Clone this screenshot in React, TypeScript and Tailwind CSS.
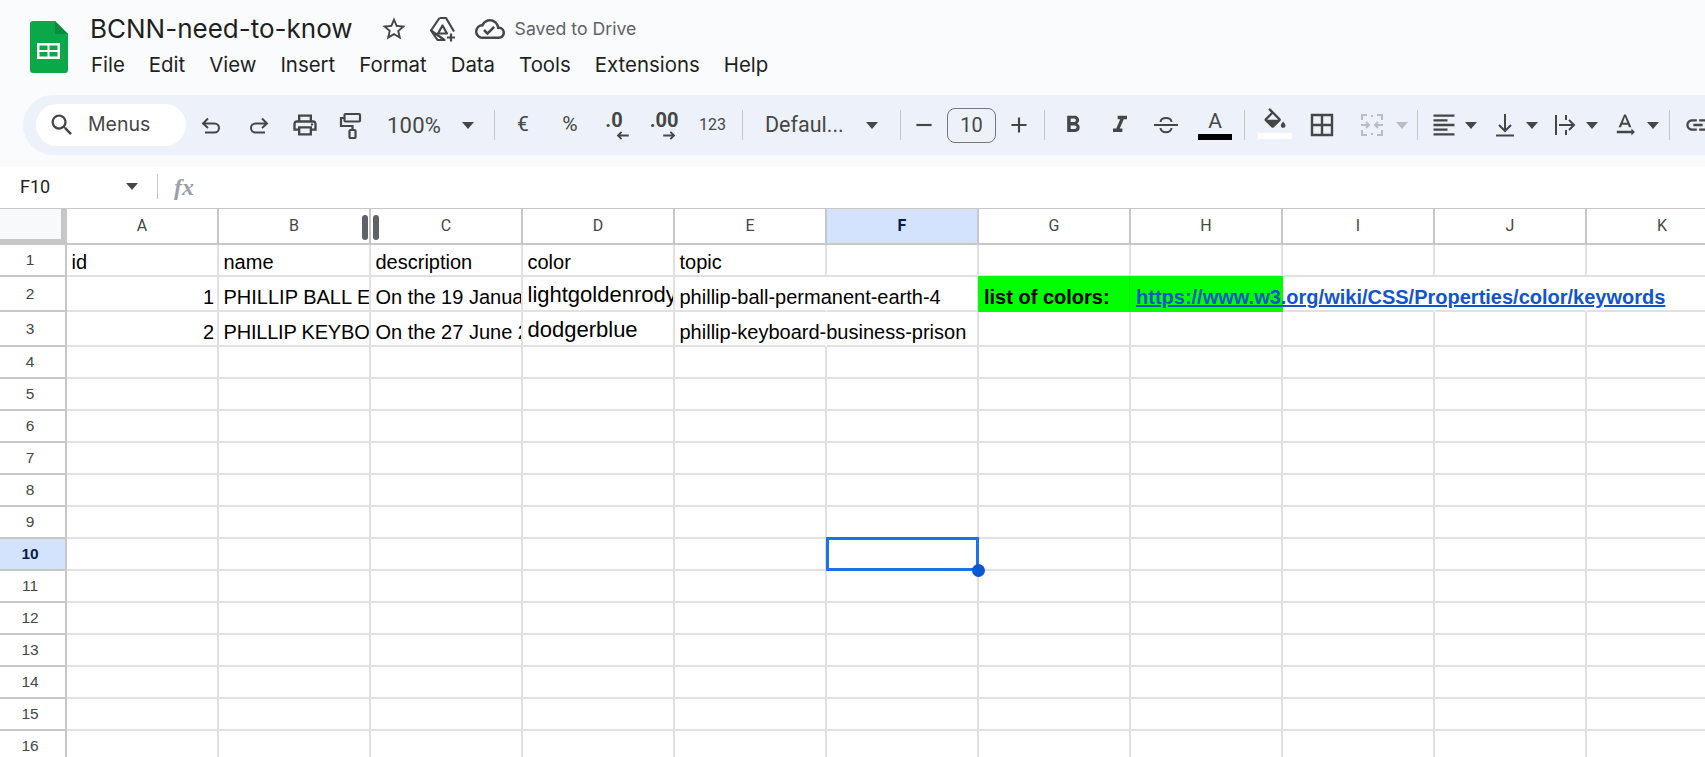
import React from 'react';
import clsx from 'clsx';
import {
  MdAdd,
  MdFormatAlignLeft,
  MdFormatBold,
  MdFormatItalic,
  MdInsertLink,
  MdOutlineCloudDone,
  MdOutlinePrint,
  MdRemove,
  MdSearch,
  MdStarBorder,
  MdTextRotationNone,
} from 'react-icons/md';

const Caret = ({ className }: { className?: string }) => (
  <svg viewBox="0 0 12 7" className={clsx('w-[12px] h-[7px] flex-none', className)}>
    <path d="M0 0h12L6 7z" fill="currentColor" />
  </svg>
);

const Sep = ({ className }: { className?: string }) => (
  <div className={clsx('w-px h-[30px] flex-none bg-[#c7c7c7]', className)} />
);

const Stroke = ({ d, className }: { d: string; className?: string }) => (
  <svg viewBox="0 0 24 24" fill="none" stroke="currentColor" strokeWidth="2" className={clsx('w-6 h-6 flex-none', className)}>
    <path d={d} />
  </svg>
);

const SheetsLogo = () => (
  <svg viewBox="0 0 38 52" className="w-[38px] h-[52px] flex-none">
    <path d="M3 0h22l13 13v36a3 3 0 0 1-3 3H3a3 3 0 0 1-3-3V3a3 3 0 0 1 3-3z" fill="#0ba84a" />
    <path d="M25 0l13 13H25z" fill="#0a8a3c" />
    <path d="M7 22h23v16H7zm2.500 2.500V29h8v-4.500zm10 0V29h8v-4.500zM9.500 31v4.500h8V31zm10 0v4.500h8V31z" fill="#fff" fillRule="evenodd" />
  </svg>
);

const PaintRoller = () => (
  <svg viewBox="0 0 28 28" fill="none" stroke="currentColor" strokeWidth="2.200" className="w-7 h-7 flex-none">
    <rect x="7.500" y="3" width="15.500" height="7.500" rx="1" />
    <path d="M7 7H4v8h11.500v4" />
    <rect x="12.500" y="19" width="6" height="8" rx="1" />
  </svg>
);

const DriveAdd = () => (
  <svg viewBox="0 0 28 26" fill="none" stroke="currentColor" strokeWidth="2.200" strokeLinejoin="round" className="w-[28px] h-[26px] flex-none">
    <path d="M10.500 2h6.500l8 13.500M15.500 24H8.500L2 14.500z" />
    <path d="M13.500 9.500 9 17.500h9z" />
    <path d="M22 17.500v8M18 21.500h8" />
    <path d="M2 14.500 10.500 2" />
  </svg>
);

const FillBucket = () => (
  <svg viewBox="0 0 24 18" fill="currentColor" className="w-[28px] h-[21px] flex-none">
    <path d="M16.560 8.940 7.620 0 6.210 1.410l2.380 2.380-5.150 5.150c-.59.59-.59 1.540 0 2.120l5.500 5.500c.29.29.68.44 1.060.44s.77-.15 1.060-.44l5.500-5.500c.59-.58.59-1.530 0-2.120zM5.210 10 10 5.210 14.790 10H5.210zM19 11.500s-2 2.170-2 3.500c0 1.100.9 2 2 2s2-.9 2-2c0-1.330-2-3.500-2-3.500z" />
  </svg>
);

function Toolbar() {
  return (
    <div className="flex-none ml-[23px] w-[1740px] h-[60px] rounded-full bg-[#edf2fa] flex items-center pl-[13px] text-[#444746]">
      <div className="w-[150px] h-[42px] rounded-full bg-white flex items-center flex-none">
        <MdSearch className="ml-[12px] w-7 h-7 flex-none" />
        <span className="ml-[12px] font-['Inter',sans-serif] text-[19.5px] text-[#444746]">Menus</span>
      </div>

      <div className="ml-[2px] w-[47px] flex justify-center">
        <Stroke d="M8 5.500 3 10.500 8 15M3 10.500h11.500a4.500 4.500 0 0 1 0 9H5" />
      </div>
      <div className="w-[46px] flex justify-center">
        <Stroke d="M16 5.500l5 5-5 4.500M21 10.500H9.500a4.500 4.500 0 0 0 0 9H19" />
      </div>
      <div className="w-[47px] flex justify-center">
        <MdOutlinePrint className="w-7 h-7" />
      </div>
      <div className="w-[46px] flex justify-center">
        <PaintRoller />
      </div>

      <div className="w-[106px] pl-[13px] pr-[6px] flex items-center justify-between flex-none">
        <span className="text-[22px] tracking-[0.2px]">100%</span>
        <Caret />
      </div>
      <Sep className="ml-[14px]" />

      <div className="w-[56px] text-center text-[21px]">€</div>
      <div className="w-[38px] text-center text-[21px]">%</div>
      <div className="w-[54px] flex flex-col items-center leading-none">
        <span className="text-[20px] font-bold -ml-[4px] leading-[19px]">.0</span>
        <svg viewBox="0 0 14 10" className="w-[13px] h-[9px] ml-[12px] mt-px" fill="none" stroke="currentColor" strokeWidth="2">
          <path d="M14 5H2M6 1 2 5l4 4" />
        </svg>
      </div>
      <div className="w-[42px] flex flex-col items-center leading-none">
        <span className="text-[20px] font-bold leading-[19px]">.00</span>
        <svg viewBox="0 0 14 10" className="w-[13px] h-[9px] ml-[10px] mt-px" fill="none" stroke="currentColor" strokeWidth="2">
          <path d="M0 5h12M8 1l4 4-4 4" />
        </svg>
      </div>
      <div className="w-[55px] text-center text-[16px]">123</div>
      <Sep className="ml-[2px]" />

      <div className="ml-[22px] w-[113px] flex items-center justify-between flex-none">
        <span className="text-[21.5px]">Defaul...</span>
        <Caret />
      </div>
      <Sep className="ml-[22px]" />

      <div className="w-[46px] flex justify-center">
        <MdRemove className="w-[26px] h-[26px]" />
      </div>
      <div className="w-[49px] h-[35px] flex-none rounded-lg border border-[#747775] flex items-center justify-center text-[20px]">
        10
      </div>
      <div className="w-[46px] flex justify-center">
        <MdAdd className="w-[26px] h-[26px]" />
      </div>
      <Sep className="ml-[2px]" />

      <div className="w-[56px] flex justify-center">
        <MdFormatBold className="w-7 h-7" />
      </div>
      <div className="w-[38px] flex justify-center">
        <MdFormatItalic className="w-7 h-7" />
      </div>
      <div className="w-[54px] flex justify-center">
        <Stroke d="M0 12h24M6.500 9c0-5.500 11-5.500 11 0M6.500 15c0 5.500 11 5.500 11 0" />
      </div>
      <div className="w-[44px] flex flex-col items-center">
        <span className="text-[21px] leading-[20px]">A</span>
        <div className="mt-[3px] w-[34px] h-[6px] bg-black" />
      </div>
      <Sep className="ml-[7px]" />

      <div className="w-[60px] flex flex-col items-center -mt-[3px]">
        <FillBucket />
        <div className="mt-[4px] w-[34px] h-[6px] bg-white" />
      </div>
      <div className="w-[34px] flex justify-center">
        <svg viewBox="0 0 24 24" fill="none" stroke="currentColor" strokeWidth="2.400" className="w-6 h-6">
          <path d="M2 2h20v20H2zM12 2v20M2 12h20" />
        </svg>
      </div>
      <div className="pl-[21px] flex items-center flex-none text-[#b9bcc1]">
        <Stroke d="M7 2H2v5M17 2h5v5M7 22H2v-5M17 22h5v-5M1 12h8M6 9l3 3-3 3M23 12h-8M18 9l-3 3 3 3M12 2v2M12 20v2" />
        <Caret className="ml-[12px]" />
      </div>
      <Sep className="ml-[9px]" />

      <MdFormatAlignLeft className="ml-[12px] w-7 h-7 flex-none" />
      <Caret className="ml-[7px]" />
      <Stroke d="M12 1v17M6 12l6 6 6-6M3 22.500h18" className="ml-[16px]" />
      <Caret className="ml-[9px]" />
      <Stroke d="M3 2v20M13 2v5M13 17v5M6 12h15M16 7l5 5-5 5" className="ml-[15px]" />
      <Caret className="ml-[9px]" />
      <MdTextRotationNone className="ml-[13px] w-7 h-7 flex-none" />
      <Caret className="ml-[8px]" />
      <Sep className="ml-[10px]" />
      <MdInsertLink className="ml-[14px] w-7 h-7 flex-none" />
    </div>
  );
}

const columns = ['A', 'B', 'C', 'D', 'E', 'F', 'G', 'H', 'I', 'J', 'K', 'L'];

type CellProps = {
  children?: React.ReactNode;
  noRight?: boolean;
  visible?: boolean;
  green?: boolean;
  className?: string;
};

const Cell = ({ children, noRight, visible, green, className }: CellProps) => (
  <div
    className={clsx(
      'relative w-[152px] flex-none flex items-end whitespace-nowrap leading-[24px] border-b-2 border-r-2',
      noRight ? 'border-r-transparent' : green ? 'border-r-[#00ea00]' : 'border-r-[#e1e1e1]',
      green ? 'border-b-transparent bg-[#00ff00] -mt-[1px] shadow-[-1px_0_0_#00ff00]' : 'border-b-[#e1e1e1]',
      visible ? 'overflow-visible' : 'overflow-hidden',
      className,
    )}
  >
    {children}
  </div>
);

const Row = ({ n, height, children }: { n: number; height: string; children?: React.ReactNode }) => (
  <div className={clsx('flex flex-none', height)}>
    <div
      className={clsx(
        'w-[67px] flex-none flex items-center justify-center pr-[5px] text-[15.5px] border-r-2 border-r-[#c7c7c7] border-b-2 border-b-[#c7c7c7]',
        n === 10 ? 'bg-[#d3e3fd] text-[#041e49] font-bold' : 'text-[#444746]',
      )}
    >
      {n}
    </div>
    {children}
  </div>
);

const Empty = ({ from = 0 }: { from?: number }) => (
  <>
    {columns.slice(from).map((c) => (
      <Cell key={c} />
    ))}
  </>
);

function Sheet() {
  const emptyRows = [4, 5, 6, 7, 8, 9];
  const lowerRows = [11, 12, 13, 14, 15, 16];
  const base = "font-['Liberation_Sans',Arial,sans-serif] text-[20px] text-black";

  return (
    <div className={clsx('flex-1 bg-white overflow-hidden', base)}>
      <Row n={1} height="h-[32px]">
        <Cell className="pl-[4.500px] pb-[1px]">id</Cell>
        <Cell className="pl-[4.500px] pb-[1px]">name</Cell>
        <Cell className="pl-[4.500px] pb-[1px]">description</Cell>
        <Cell className="pl-[4.500px] pb-[1px]">color</Cell>
        <Cell className="pl-[4.500px] pb-[1px]">topic</Cell>
        <Empty from={5} />
      </Row>
      <Row n={2} height="h-[35px]">
        <Cell className="justify-end pr-[3px] pb-[1px]">1</Cell>
        <Cell className="pl-[4.500px] pb-[1px]">PHILLIP BALL EARTH</Cell>
        <Cell className="pl-[4.500px] pb-[1px]">On the 19 January</Cell>
        <Cell className="pl-[4.500px] pb-[3px] text-[22px]">lightgoldenrodyellow</Cell>
        <Cell noRight visible className="pl-[4.500px] pb-[1px]">phillip-ball-permanent-earth-4</Cell>
        <Cell />
        <Cell green className="pl-[5px] pb-[1px] font-bold">list of colors:</Cell>
        <Cell noRight visible green className="pl-[5px] pb-[1px] font-bold text-[#1155cc] underline">
          https://www.w3.org/wiki/CSS/Properties/color/keywords
        </Cell>
        <Cell noRight />
        <Cell noRight />
        <Empty from={10} />
      </Row>
      <Row n={3} height="h-[35px]">
        <Cell className="justify-end pr-[3px] pb-[1px]">2</Cell>
        <Cell className="pl-[4.500px] pb-[1px] tracking-[-0.2px]">PHILLIP KEYBOARD</Cell>
        <Cell className="pl-[4.500px] pb-[1px]">On the 27 June 2021</Cell>
        <Cell className="pl-[4.500px] pb-[3px] text-[22px]">dodgerblue</Cell>
        <Cell noRight visible className="pl-[4.500px] pb-[1px]">phillip-keyboard-business-prison</Cell>
        <Empty from={5} />
      </Row>
      {emptyRows.map((n) => (
        <Row key={n} n={n} height="h-[32px]">
          <Empty />
        </Row>
      ))}
      <Row n={10} height="h-[32px]">
        {columns.slice(0, 5).map((c) => (
          <Cell key={c} />
        ))}
        <Cell visible>
          <div className="absolute -left-[1px] -top-[2px] -right-[2px] -bottom-[2px] border-[3px] border-[#1a73e8] z-10" />
          <div className="absolute -right-[8px] -bottom-[8px] w-[13px] h-[13px] rounded-full bg-[#0b57d0] z-20" />
        </Cell>
        <Empty from={6} />
      </Row>
      {lowerRows.map((n) => (
        <Row key={n} n={n} height="h-[32px]">
          <Empty />
        </Row>
      ))}
    </div>
  );
}

export default function App() {
  return (
    <div className="w-[1705px] h-[757px] overflow-hidden bg-[#f9fbfd] flex flex-col font-['Roboto',sans-serif]">
      {/* title + menus */}
      <div className="h-[95px] flex-none flex items-start pl-[30px] pt-[21px]">
        <SheetsLogo />
        <div className="ml-[22px] -mt-[10px]">
          <div className="flex items-center h-[36px]">
            <span className="font-['Inter',sans-serif] text-[26px] text-[#1f1f1f] leading-none">BCNN-need-to-know</span>
            <MdStarBorder className="ml-[27px] w-7 h-7 text-[#444746]" />
            <div className="ml-[21px] text-[#444746]">
              <DriveAdd />
            </div>
            <MdOutlineCloudDone className="ml-[18px] w-[30px] h-[30px] text-[#444746]" />
            <span className="ml-[10px] font-['Inter',sans-serif] text-[17.7px] text-[#5f6368]">Saved to Drive</span>
          </div>
          <div className="flex gap-[24px] mt-[3px] ml-px font-['Inter',sans-serif] text-[20.4px] text-[#1f1f1f]">
            <span>File</span>
            <span>Edit</span>
            <span>View</span>
            <span>Insert</span>
            <span>Format</span>
            <span>Data</span>
            <span>Tools</span>
            <span>Extensions</span>
            <span>Help</span>
          </div>
        </div>
      </div>

      <Toolbar />
      <div className="h-[12px] flex-none" />

      {/* name box + formula bar */}
      <div className="h-[41px] flex-none bg-white flex items-center text-[#1f1f1f] pb-[2px]">
        <span className="ml-[20px] w-[106px] text-[18px]">F10</span>
        <Caret className="text-[#444746]" />
        <div className="ml-[19px] w-px h-[25px] bg-[#c7c7c7]" />
        <span className="ml-[16px] font-['Liberation_Serif',serif] italic font-bold text-[24px] text-[#9aa0a6]">fx</span>
      </div>

      {/* column headers */}
      <div className="relative h-[37px] flex-none flex bg-white border-t border-t-[#c7c7c7]">
        <div className="w-[67px] flex-none bg-[#f8f9fa] border-r-[6px] border-b-[6px] border-[#c7c7c7]" />
        {columns.map((c) => (
          <div
            key={c}
            className={clsx(
              'w-[152px] flex-none flex items-center justify-center text-[16px] border-r-2 border-r-[#c7c7c7] border-b-2 border-b-[#c7c7c7]',
              c === 'F' ? 'bg-[#d3e3fd] text-[#041e49] font-bold' : 'text-[#444746]',
            )}
          >
            {c}
          </div>
        ))}
        {/* column resize handle */}
        <div className="absolute left-[362px] top-[6px] w-[6px] h-[25px] rounded-full bg-[#5f6368]" />
        <div className="absolute left-[373px] top-[6px] w-[6px] h-[25px] rounded-full bg-[#5f6368]" />
      </div>

      <Sheet />
    </div>
  );
}
